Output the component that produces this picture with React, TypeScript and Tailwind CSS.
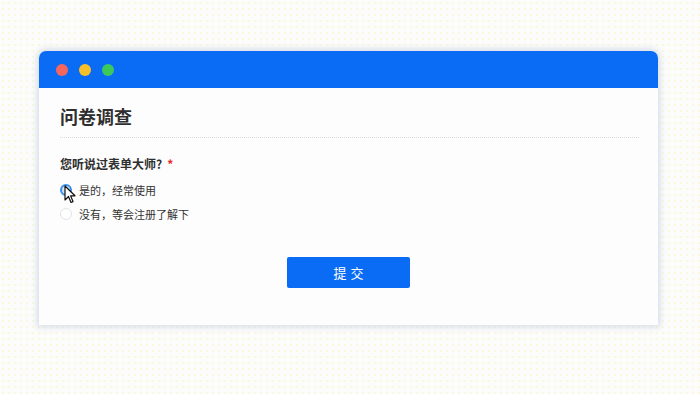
import { useState } from 'react'

const options = ['是的，经常使用', '没有，等会注册了解下']

export default function App() {
  const [picked, setPicked] = useState(0)

  return (
    <div
      className="w-[700px] h-[394px] bg-[#fcfcfb] bg-[radial-gradient(#f7f3bd_0.6px,transparent_0.8px)] bg-[length:6px_6px] pt-[51px] px-[39px]"
      style={{ fontFamily: '"Noto Sans CJK SC", "Noto Sans", sans-serif' }}
    >
      <div className="w-[619px] h-[274px] bg-[#fdfdfd] rounded-t-[7px] shadow-[0_0_6px_2px_rgba(180,195,220,0.55)] flex flex-col">
        {/* title bar */}
        <div className="h-[37px] bg-[#0a6cf5] rounded-t-[7px] flex items-center gap-[11px] pl-[17px]">
          <span className="w-3 h-3 rounded-full bg-[#f7665e]" />
          <span className="w-3 h-3 rounded-full bg-[#f7c02a]" />
          <span className="w-3 h-3 rounded-full bg-[#3cc85a]" />
        </div>

        <div className="px-[21px] flex flex-col">
          <h1 className="text-[18px] font-bold text-[#2f2f2f] leading-none pt-[19px] pb-[12px]">问卷调查</h1>
          <div className="border-t border-dotted border-[#dcdcdc] mr-[-2px]" />

          <div className="mt-[20px] text-[12px] font-semibold text-[#2f2f2f] leading-none flex items-center">
            您听说过表单大师?
            <span className="text-[#e8261c] ml-[5px]">*</span>
          </div>

          <div className="mt-[14px] flex flex-col gap-[12px]">
            {options.map((label, i) => (
              <label key={label} className="flex items-center gap-[7px] text-[11px] text-[#333] leading-none cursor-pointer relative" onClick={() => setPicked(i)}>
                <span
                  className={
                    i === picked
                      ? 'w-[12px] h-[12px] rounded-full border-2 border-[#3c8ee8] bg-[#cfe3f7]'
                      : 'w-[12px] h-[12px] rounded-full border border-[#e3e3e3] bg-white'
                  }
                />
                {label}
                {i === 0 && (
                  <svg className="absolute left-[4px] top-[1px]" width="12" height="19" viewBox="0 0 12 19">
                    <path d="M1 1 L1 15 L4.5 11.5 L7 17.5 L9 16.6 L6.6 10.8 L11 10.8 Z" fill="#fff" stroke="#111" strokeWidth="1.2" strokeLinejoin="round" />
                  </svg>
                )}
              </label>
            ))}
          </div>

          <div className="flex justify-center mt-[37px]">
            <button className="w-[123px] h-[31px] bg-[#0a6cf5] rounded-[2px] text-white text-[13px] tracking-[4px] pl-[4px]">提交</button>
          </div>
        </div>
      </div>
    </div>
  )
}
